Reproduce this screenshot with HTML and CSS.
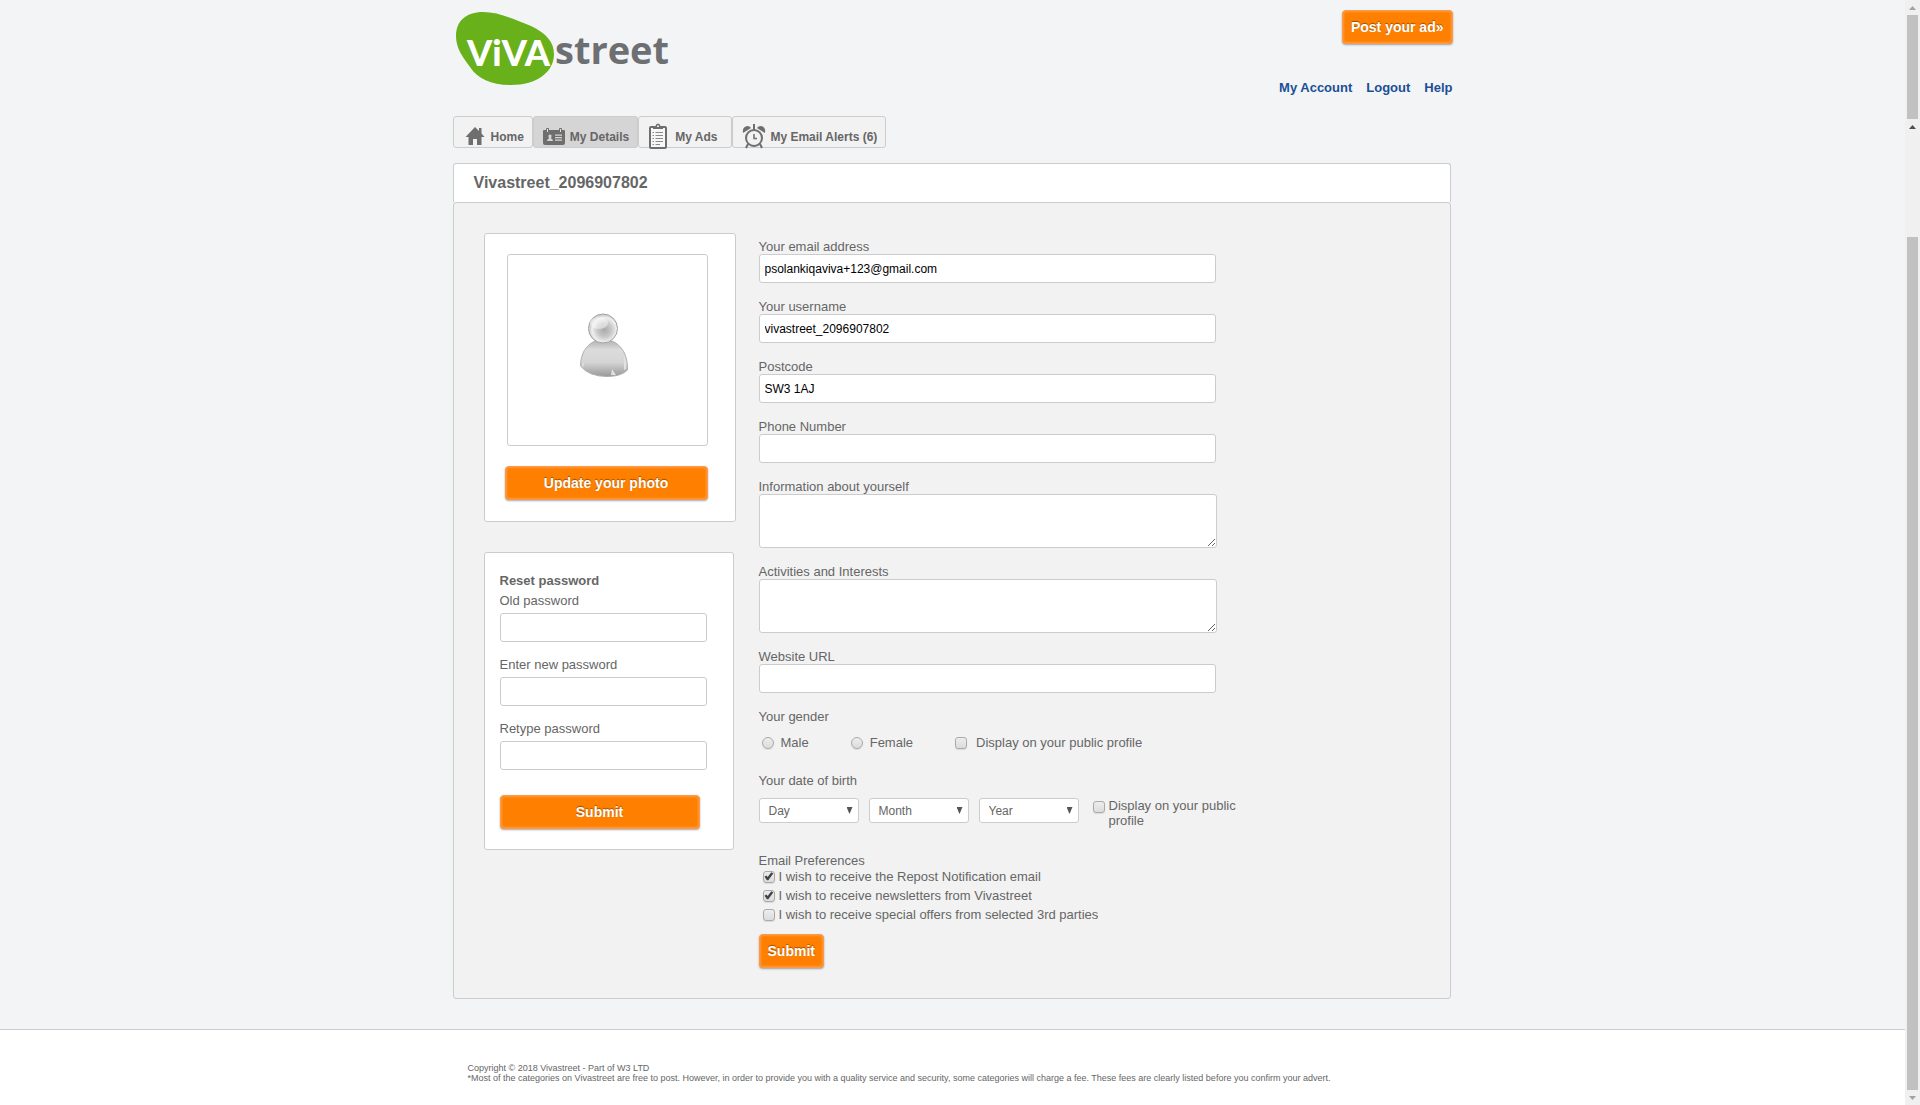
FILE: index.html
```html
<!DOCTYPE html>
<html lang="en">
<head>
<meta charset="utf-8">
<title>My Details - Vivastreet</title>
<link rel="stylesheet" href="styles.css">
</head>
<body>
<div class="page">
  <div class="wrap">
    <header class="header">
      <a href="#" class="logo" aria-label="Vivastreet">
        <svg width="220" height="80" viewBox="0 0 220 80">
          <path fill="#68b11b" d="M3 28C3 13 13 4 30 4C46 4 60 11 78 18C93 25 101 34 101 46C101 64 84 77 58 77C38 77 25 71 17 59C9 48 3 40 3 28Z"/>
          <text class="logo-viva" x="14" y="58">ViVA</text>
          <text class="logo-street" x="102" y="56">street</text>
        </svg>
      </a>
      <div class="header-side">
        <button type="button" class="btn">Post your ad»</button>
        <nav class="links">
          <a href="#">My Account</a>
          <a href="#">Logout</a>
          <a href="#">Help</a>
        </nav>
      </div>
    </header>

    <nav class="tabs">
      <a href="#" class="tab">
        <svg width="24" height="26" viewBox="0 0 24 26" fill="#6e6e6e"><path d="M12 4L2.500 14H5.500V22H10V16H14V22H18.500V14H21.500L18.500 10.500V5H16V8Z"/></svg>
        Home
      </a>
      <a href="#" class="tab tab-active">
        <svg width="24" height="26" viewBox="0 0 24 26"><path fill="#6e6e6e" d="M2 7H22Q23 7 23 8V20Q23 22 21 22H3Q1 22 1 20V8Q1 7 2 7Z"/><path fill="#e0e0e0" stroke="#6e6e6e" d="M4.500 5.500H6.500V9.500H4.500ZM17.500 5.500H19.500V9.500H17.500Z"/><path fill="#d5d5d5" d="M5 18Q5 16 7 15.500Q5.500 11.500 8 11.500Q10.500 11.500 9 15.500Q11 16 11 18ZM13 11.500H20V12.700H13ZM13 14H20V15.200H13ZM13 16.500H20V17.700H13Z"/></svg>
        My Details
      </a>
      <a href="#" class="tab tab-wide">
        <svg width="24" height="26" viewBox="0 0 24 26" fill="none" stroke="#6e6e6e"><rect x="3" y="4" width="16" height="21" rx="1" stroke-width="2" fill="#f7f7f7"/><path fill="#6e6e6e" stroke="none" d="M6 3H8.500Q9 .5 11 .5Q13 .5 13.500 3H16V6H6Z"/><path fill="#eee" stroke="none" d="M10 2.500H12V4H10Z"/><path d="M8.500 9.500H16M8.500 12.500H16M8.500 15.500H16M8.500 18.500H16M8.500 21.500H13M5.500 9.500H7M5.500 12.500H7M5.500 15.500H7M5.500 18.500H7M5.500 21.500H7" stroke="#8a8a8a"/></svg>
        My Ads
      </a>
      <a href="#" class="tab">
        <svg width="24" height="26" viewBox="0 0 24 26" fill="none" stroke="#6e6e6e" stroke-width="2"><circle cx="12" cy="15" r="8"/><path fill="#6e6e6e" stroke="none" d="M1 10Q0 4 5 3Q8 3 9 5ZM23 10Q24 4 19 3Q16 3 15 5ZM11 1H13V7H11Z"/><path d="M12 11V15.500H15" stroke-width="1.500"/><path d="M6 21L4 25M18 21L20 25"/></svg>
        My Email Alerts (6)
      </a>
    </nav>

    <h1 class="title">Vivastreet_2096907802</h1>

    <main class="panel">
      <div class="side">
        <section class="card photo">
          <div class="frame">
            <svg width="50" height="66" viewBox="0 0 50 66">
              <defs>
                <radialGradient id="head" cx=".55" cy=".55" r=".5"><stop offset="0" stop-color="#aaa"/><stop offset=".5" stop-color="#c9c9c9"/><stop offset=".85" stop-color="#efefef"/><stop offset="1" stop-color="#d2d2d2"/></radialGradient>
                <linearGradient id="torso" x1="0" y1="0" x2="0" y2="1"><stop offset="0" stop-color="#b4b4b4"/><stop offset=".25" stop-color="#dcdcdc"/><stop offset=".6" stop-color="#d5d5d5"/><stop offset="1" stop-color="#989898"/></linearGradient>
              </defs>
              <path fill="url(#torso)" stroke="#b0b0b0" d="M16 28C7 32 1.500 41 1.500 53Q10 63.500 28 63.500Q42 63.500 48.500 57C49 43 43 32 33 28Z"/>
              <path fill="#e2e2e2" d="M33 56L37 62H32ZM3 51L5 50L4 55ZM45 42Q48 48 47 56L45 57Z"/>
              <circle cx="24" cy="15.500" r="14.500" fill="url(#head)" stroke="#a3a3a3"/>
              <ellipse cx="20" cy="10" rx="9" ry="6" fill="#fff" opacity=".45"/>
            </svg>
          </div>
          <button type="button" class="btn">Update your photo</button>
        </section>

        <form class="card reset">
          <h2 class="reset-title">Reset password</h2>
          <div class="reset-field"><label for="old">Old password</label><input class="input" type="password" id="old"></div>
          <div class="reset-field"><label for="new">Enter new password</label><input class="input" type="password" id="new"></div>
          <div class="reset-field"><label for="again">Retype password</label><input class="input" type="password" id="again"></div>
          <button type="submit" class="btn">Submit</button>
        </form>
      </div>

      <form class="details">
        <div class="field"><label for="email">Your email address</label><input class="input" type="text" id="email" value="psolankiqaviva+123@gmail.com"></div>
        <div class="field"><label for="user">Your username</label><input class="input" type="text" id="user" value="vivastreet_2096907802"></div>
        <div class="field"><label for="postcode">Postcode</label><input class="input" type="text" id="postcode" value="SW3 1AJ"></div>
        <div class="field"><label for="phone">Phone Number</label><input class="input" type="text" id="phone"></div>
        <div class="field field-area"><label for="about">Information about yourself</label><textarea class="input area" id="about"></textarea></div>
        <div class="field field-area"><label for="interests">Activities and Interests</label><textarea class="input area" id="interests"></textarea></div>
        <div class="field"><label for="url">Website URL</label><input class="input" type="text" id="url"></div>

        <fieldset class="group">
          <legend>Your gender</legend>
          <div class="gender">
            <label class="option"><input type="radio" class="tick radio" name="gender">Male</label>
            <label class="option"><input type="radio" class="tick radio" name="gender">Female</label>
            <label class="option option-check"><input type="checkbox" class="tick">Display on your public profile</label>
          </div>
        </fieldset>

        <fieldset class="group">
          <legend>Your date of birth</legend>
          <div class="birth">
            <span class="select"><select aria-label="Day"><option>Day</option></select></span>
            <span class="select"><select aria-label="Month"><option>Month</option></select></span>
            <span class="select"><select aria-label="Year"><option>Year</option></select></span>
            <label class="public"><input type="checkbox" class="tick">Display on your public profile</label>
          </div>
        </fieldset>

        <fieldset class="group">
          <legend>Email Preferences</legend>
          <div class="prefs">
            <label class="pref"><input type="checkbox" class="tick" checked>I wish to receive the Repost Notification email</label>
            <label class="pref"><input type="checkbox" class="tick" checked>I wish to receive newsletters from Vivastreet</label>
            <label class="pref"><input type="checkbox" class="tick">I wish to receive special offers from selected 3rd parties</label>
          </div>
        </fieldset>
        <button type="submit" class="btn">Submit</button>
      </form>
    </main>
  </div>

  <footer class="footer">
    <div class="wrap footer-text">
      <p>Copyright © 2018 Vivastreet - Part of W3 LTD</p>
      <p>*Most of the categories on Vivastreet are free to post. However, in order to provide you with a quality service and security, some categories will charge a fee. These fees are clearly listed before you confirm your advert.</p>
    </div>
  </footer>
</div>

<div class="scroll" aria-hidden="true">
  <i class="arrow"></i>
  <i class="thumb thumb-top"></i>
  <i class="arrow arrow-dark"></i>
  <i class="thumb thumb-main"></i>
  <i class="arrow arrow-down"></i>
</div>
</body>
</html>
```
FILE: styles.css
```css
* { box-sizing: border-box; }

body {
  margin: 0;
  min-height: 100vh;
  display: grid;
  grid-template-columns: 1fr 15px;
  background: #f3f4f6;
  color: #666;
  font: 13px/15px "Liberation Sans", Arial, sans-serif;
}

h1, h2, p { margin: 0; }

.page { display: flex; flex-direction: column; }
.wrap { width: 100%; max-width: 1000px; margin: 0 auto; }

/* Header */
.header {
  display: flex;
  justify-content: space-between;
  padding: 8px 0 21px;
}
.logo { display: flex; margin-bottom: 7px; }
.logo-viva { font: 900 36px Lato, sans-serif; fill: #fff; }
.logo-street { font: 700 38px "Open Sans", sans-serif; fill: #6d6f72; }
.header-side {
  display: flex;
  flex-direction: column;
  justify-content: space-between;
  align-items: flex-end;
  padding-top: 2px;
}
.links { display: flex; gap: 14px; }
.links a { color: #1a4f96; font-weight: bold; text-decoration: none; }

.btn {
  height: 34px;
  padding: 0 8px;
  border: 1px solid #fd9a45;
  border-radius: 4px;
  background: #ff8000;
  box-shadow: inset 0 0 2px 1px #ff983f, 0 1px 2px rgba(0, 0, 0, .35);
  color: #fff;
  font: bold 14px/16px "Liberation Sans", Arial, sans-serif;
  text-shadow: 0 -1px 1px rgba(0, 0, 0, .4);
}

/* Tabs */
.tabs { display: flex; margin-bottom: 15px; }
.tab {
  display: flex;
  align-items: center;
  gap: 4px;
  height: 32px;
  padding: 10px 8px 0 9px;
  border: 1px solid #ccc;
  border-radius: 3px;
  background: #f2f2f2;
  color: #666;
  font-size: 12px;
  font-weight: bold;
  text-decoration: none;
}
.tab svg { margin-bottom: 2px; }
.tab-active { padding-left: 8px; background: #d5d5d5; }
.tab-wide { padding-left: 8px; padding-right: 14px; }

/* Main panel */
.title {
  margin-right: 2px;
  padding: 9px 20px;
  border: 1px solid #ccc;
  border-bottom: 0;
  border-radius: 3px 3px 0 0;
  background: #fff;
  font-size: 16px;
  line-height: 20px;
}
.panel {
  display: flex;
  gap: 23px;
  margin: 0 2px 30px 0;
  padding: 30px;
  border: 1px solid #ccc;
  border-radius: 3px;
  background: #f2f2f2;
}
.side {
  flex: none;
  width: 252px;
  display: flex;
  flex-direction: column;
  align-items: flex-start;
  gap: 30px;
}
.card { border: 1px solid #ccc; border-radius: 3px; background: #fff; }
.photo {
  width: 252px;
  display: flex;
  flex-direction: column;
  gap: 20px;
  padding: 20px 27px 21px 20px;
}
.frame {
  display: flex;
  align-items: center;
  justify-content: center;
  height: 192px;
  margin-left: 2px;
  padding: 0 6px 8px 0;
  border: 1px solid #ccc;
  border-radius: 3px;
}
.reset { width: 250px; padding: 18px 26px 20px 15px; }
.reset-title { padding-bottom: 2px; font-size: 13px; line-height: 20px; }
.reset-field { margin-bottom: 15px; }
.reset-field label { display: block; padding-bottom: 5px; }
.reset .btn { width: 200px; margin-top: 10px; }

/* Form controls */
.input {
  display: block;
  width: 100%;
  height: 29px;
  padding: 0 5px;
  border: 1px solid #ccc;
  border-radius: 3px;
  background: #fff;
  color: #000;
  font: 12px/14px "Liberation Sans", Arial, sans-serif;
}
.area { height: 54px; padding: 5px; }
.details { flex: 1; padding-top: 6px; }
.field { max-width: 457px; margin-bottom: 16px; }
.field-area { max-width: 458px; }
.field label { display: block; }

.group { margin: 0; padding: 0; border: 0; }
.group legend { padding: 0; }

.tick {
  appearance: none;
  flex: none;
  width: 12px;
  height: 12px;
  margin: 0;
  border: 1px solid #aaa;
  border-radius: 3px;
  background: linear-gradient(#ededed, #dcdcdc);
  box-shadow: 0 1px 1px rgba(0, 0, 0, .1);
}
.radio { border-radius: 50%; }
.tick:checked::before {
  content: "";
  display: block;
  width: 10px;
  height: 10px;
  background: #444;
  clip-path: polygon(10% 52%, 28% 40%, 42% 55%, 78% 8%, 98% 20%, 48% 88%, 34% 88%);
}

.gender { display: flex; gap: 42px; padding: 11px 3px 23px; }
.option { display: flex; align-items: center; gap: 7px; }
.option-check { gap: 9px; }

.birth { display: flex; gap: 10px; padding: 10px 0 25px; }
.select { position: relative; width: 100px; height: 25px; }
.select::after {
  content: "";
  position: absolute;
  top: 9px;
  right: 6px;
  width: 6px;
  height: 7px;
  background: #555;
  clip-path: polygon(0 0, 100% 0, 50% 100%);
}
.select select {
  appearance: none;
  width: 100%;
  height: 100%;
  padding: 0 9px;
  border: 1px solid #ccc;
  border-radius: 3px;
  background: #fff;
  color: #666;
  font: 12px/14px "Liberation Sans", Arial, sans-serif;
}
.public { display: flex; gap: 4px; width: 160px; padding-left: 4px; }
.public .tick { margin-top: 3px; }

.prefs { display: flex; flex-direction: column; gap: 4px; padding: 1px 4px 12px; }
.pref { display: flex; align-items: center; gap: 4px; }

/* Footer */
.footer { flex: 1; border-top: 1px solid #ccc; background: #fff; }
.footer-text { padding: 33px 15px 20px; font-size: 9px; line-height: 10px; }

/* Scroll rail */
.scroll {
  display: flex;
  flex-direction: column;
  align-items: center;
  background: #f0f0f0;
}
.thumb { width: 11px; background: #c1c1c1; }
.thumb-top { height: 104px; }
.thumb-main { flex: 1; margin-top: 103px; }
.arrow {
  width: 7px;
  height: 4px;
  margin: 6px 0 5px;
  background: #a3a3a3;
  clip-path: polygon(50% 0, 100% 100%, 0 100%);
}
.arrow-dark { background: #505050; }
.arrow-down { clip-path: polygon(0 0, 100% 0, 50% 100%); }
```
